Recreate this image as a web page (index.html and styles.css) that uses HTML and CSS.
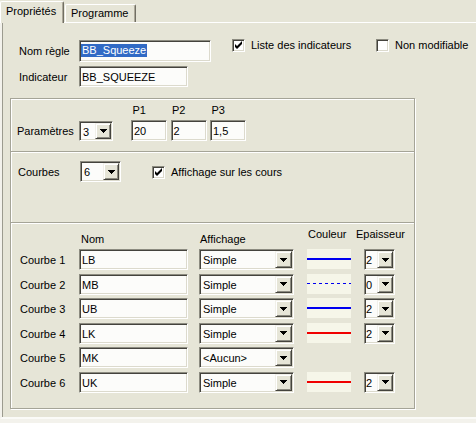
FILE: index.html
```html
<!DOCTYPE html>
<html lang="fr">
<head>
<meta charset="utf-8">
<title>Propriétés</title>
<link rel="stylesheet" href="styles.css">
</head>
<body>
<div class="tabs">
  <div class="tab active">Propriétés</div>
  <div class="tab">Programme</div>
</div>
<div class="panel">
  <div class="head">
    <div class="hrow">
      <span class="lbl w60">Nom règle</span>
      <div class="field f-nom"><span class="sel">BB_Squeeze</span></div>
      <div class="checks">
        <div class="chk c1"><span class="box"><svg width="9" height="9" viewBox="0 0 9 9"><path d="M1 3v3l2 2l5-5v-3l-5 5z" fill="#000"/></svg></span><span class="ctext">Liste des indicateurs</span></div>
        <div class="chk"><span class="box"></span><span class="ctext">Non modifiable</span></div>
      </div>
    </div>
    <div class="hrow r2">
      <span class="lbl w60">Indicateur</span>
      <div class="field f-ind">BB_SQUEEZE</div>
    </div>
  </div>

  <div class="group">
    <div class="sec s-params">
      <span class="lbl l-params">Paramètres</span>
      <div class="combo c-3"><span class="val">3</span><span class="btn"><svg width="7" height="4" viewBox="0 0 7 4"><path d="M0 0h7v1h-1v1h-1v1h-1v1h-1v-1h-1v-1h-1v-1h-1z" fill="#000"/></svg></span></div>
      <div class="pcols">
        <div class="pcol"><span class="plbl">P1</span><div class="field f-p">20</div></div>
        <div class="pcol"><span class="plbl">P2</span><div class="field f-p">2</div></div>
        <div class="pcol"><span class="plbl">P3</span><div class="field f-p">1,5</div></div>
      </div>
    </div>

    <div class="sec s-courbes">
      <span class="lbl l-courbes">Courbes</span>
      <div class="combo c-6"><span class="val">6</span><span class="btn"><svg width="7" height="4" viewBox="0 0 7 4"><path d="M0 0h7v1h-1v1h-1v1h-1v1h-1v-1h-1v-1h-1v-1h-1z" fill="#000"/></svg></span></div>
      <div class="chk c-aff"><span class="box"><svg width="9" height="9" viewBox="0 0 9 9"><path d="M1 3v3l2 2l5-5v-3l-5 5z" fill="#000"/></svg></span><span class="ctext">Affichage sur les cours</span></div>
    </div>

    <div class="sec s-table">
      <div class="grid thead">
        <span></span>
        <span class="th th-nom">Nom</span>
        <span class="th th-aff">Affichage</span>
        <span class="th th-col">Couleur</span>
        <span class="th th-ep">Epaisseur</span>
      </div>
      <div class="grid tbody">
        <span class="rl">Courbe 1</span>
        <div class="field f-n">LB</div>
        <div class="combo c-aff"><span class="val">Simple</span><span class="btn"><svg width="7" height="4" viewBox="0 0 7 4"><path d="M0 0h7v1h-1v1h-1v1h-1v1h-1v-1h-1v-1h-1v-1h-1z" fill="#000"/></svg></span></div>
        <div class="swatch"><span class="ln solid blue"></span></div>
        <div class="combo c-ep"><span class="val">2</span><span class="btn"><svg width="7" height="4" viewBox="0 0 7 4"><path d="M0 0h7v1h-1v1h-1v1h-1v1h-1v-1h-1v-1h-1v-1h-1z" fill="#000"/></svg></span></div>

        <span class="rl">Courbe 2</span>
        <div class="field f-n">MB</div>
        <div class="combo c-aff"><span class="val">Simple</span><span class="btn"><svg width="7" height="4" viewBox="0 0 7 4"><path d="M0 0h7v1h-1v1h-1v1h-1v1h-1v-1h-1v-1h-1v-1h-1z" fill="#000"/></svg></span></div>
        <div class="swatch"><span class="ln dashed"></span></div>
        <div class="combo c-ep"><span class="val">0</span><span class="btn"><svg width="7" height="4" viewBox="0 0 7 4"><path d="M0 0h7v1h-1v1h-1v1h-1v1h-1v-1h-1v-1h-1v-1h-1z" fill="#000"/></svg></span></div>

        <span class="rl">Courbe 3</span>
        <div class="field f-n">UB</div>
        <div class="combo c-aff"><span class="val">Simple</span><span class="btn"><svg width="7" height="4" viewBox="0 0 7 4"><path d="M0 0h7v1h-1v1h-1v1h-1v1h-1v-1h-1v-1h-1v-1h-1z" fill="#000"/></svg></span></div>
        <div class="swatch"><span class="ln solid blue"></span></div>
        <div class="combo c-ep"><span class="val">2</span><span class="btn"><svg width="7" height="4" viewBox="0 0 7 4"><path d="M0 0h7v1h-1v1h-1v1h-1v1h-1v-1h-1v-1h-1v-1h-1z" fill="#000"/></svg></span></div>

        <span class="rl">Courbe 4</span>
        <div class="field f-n">LK</div>
        <div class="combo c-aff"><span class="val">Simple</span><span class="btn"><svg width="7" height="4" viewBox="0 0 7 4"><path d="M0 0h7v1h-1v1h-1v1h-1v1h-1v-1h-1v-1h-1v-1h-1z" fill="#000"/></svg></span></div>
        <div class="swatch"><span class="ln solid red"></span></div>
        <div class="combo c-ep"><span class="val">2</span><span class="btn"><svg width="7" height="4" viewBox="0 0 7 4"><path d="M0 0h7v1h-1v1h-1v1h-1v1h-1v-1h-1v-1h-1v-1h-1z" fill="#000"/></svg></span></div>

        <span class="rl">Courbe 5</span>
        <div class="field f-n">MK</div>
        <div class="combo c-aff"><span class="val">&lt;Aucun&gt;</span><span class="btn"><svg width="7" height="4" viewBox="0 0 7 4"><path d="M0 0h7v1h-1v1h-1v1h-1v1h-1v-1h-1v-1h-1v-1h-1z" fill="#000"/></svg></span></div>
        <span></span>
        <span></span>

        <span class="rl">Courbe 6</span>
        <div class="field f-n">UK</div>
        <div class="combo c-aff"><span class="val">Simple</span><span class="btn"><svg width="7" height="4" viewBox="0 0 7 4"><path d="M0 0h7v1h-1v1h-1v1h-1v1h-1v-1h-1v-1h-1v-1h-1z" fill="#000"/></svg></span></div>
        <div class="swatch"><span class="ln solid red"></span></div>
        <div class="combo c-ep"><span class="val">2</span><span class="btn"><svg width="7" height="4" viewBox="0 0 7 4"><path d="M0 0h7v1h-1v1h-1v1h-1v1h-1v-1h-1v-1h-1v-1h-1z" fill="#000"/></svg></span></div>
      </div>
    </div>
  </div>
</div>
</body>
</html>
```

FILE: styles.css
```css
* { box-sizing: border-box; }

html, body {
  margin: 0;
  background: #f3f2ec;
}

body {
  width: 476px;
  height: 423px;
  overflow: hidden;
  font-family: "Liberation Sans", Arial, sans-serif;
  font-size: 11px;
  color: #000;
}

/* ---------- tabs ---------- */
.tabs {
  height: 22px;
  display: flex;
  align-items: flex-end;
  background: #e6e5d7;
}

.tab {
  height: 18px;
  width: 71px;
  margin-left: 1px;
  padding: 1px 0 0 5px;
  line-height: 14px;
  background: #e6e5d7;
  border-top: 1px solid #fff;
  border-left: 1px solid #fff;
  border-right: 1px solid #716f64;
  border-radius: 2px 2px 0 0;
  box-shadow: inset -1px 0 #aca899;
  white-space: nowrap;
}

.tab.active {
  position: relative;
  z-index: 1;
  height: 22px;
  width: 64px;
  margin-left: 0;
  margin-bottom: -1px;
  padding-top: 2px;
}

/* ---------- panel ---------- */
.panel {
  height: 397px;
  background: #e6e5d7;
  border-top: 1px solid #fff;
  border-left: 2px solid #f3f2ec;
  border-bottom: 2px solid #fbfbf8;
  box-shadow: inset 1px 0 #9c9b8f;
}

.head {
  padding: 17px 0 0 17px;
}

.hrow {
  display: flex;
  align-items: center;
  height: 22px;
}

.hrow.r2 {
  margin-top: 4px;
  height: 21px;
}

.lbl { white-space: nowrap; }
.w60 { width: 60px; flex: none; }

/* ---------- sunken fields ---------- */
.field,
.combo,
.box {
  border: 1px solid;
  border-color: #8c8b80 #fff #fff #8c8b80;
  box-shadow: inset 1px 1px #44433d, inset -1px -1px #dcdacd;
  background: #fcfcfa;
}

.field {
  flex: none;
  height: 21px;
  padding: 4px 0 0 2px;
  line-height: 13px;
  white-space: nowrap;
  overflow: hidden;
}

.f-nom {
  width: 132px;
  height: 22px;
  padding-top: 3px;
}

.sel {
  display: inline-block;
  line-height: 13px;
  padding: 0 1px;
  margin-left: -1px;
  background: #316ac5;
  color: #fff;
}

.f-ind { width: 109px; }

/* ---------- checkboxes ---------- */
.checks {
  display: flex;
  align-self: flex-start;
  margin: -1px 0 0 21px;
}

.chk {
  display: flex;
  align-items: center;
  white-space: nowrap;
}

.chk.c1 { width: 144px; }

.box {
  flex: none;
  width: 13px;
  height: 13px;
  padding: 1px;
  background: #fff;
  margin-right: 6px;
}

.box svg { display: block; }

.ctext { line-height: 13px; }

/* ---------- combo boxes ---------- */
.combo {
  flex: none;
  display: flex;
  height: 21px;
  padding: 1px;
}

.combo .val {
  flex: 1;
  padding: 3px 0 0 2px;
  line-height: 13px;
  white-space: nowrap;
  overflow: hidden;
}

.combo .btn {
  flex: none;
  width: 16px;
  display: flex;
  align-items: center;
  justify-content: center;
  background: #e6e5d7;
  border: 1px solid;
  border-color: #f1f0e9 #44433d #44433d #f1f0e9;
  box-shadow: inset 1px 1px #fff, inset -1px -1px #8c8b80;
}

.combo .btn svg { display: block; }

.c-3 { width: 34px; height: 20px; }
.c-6 { width: 41px; }
.c-aff { width: 95px; }
.c-aff .btn { width: 17px; }
.c-ep { width: 31px; }
.c-ep .val { padding-left: 0; }

/* ---------- group box ---------- */
.group {
  margin: 11px 0 0 8px;
  width: 405px;
  height: 311px;
  border: 1px solid #a5a497;
  box-shadow: inset 1px 1px #fff, 1px 1px #fff;
  display: flex;
  flex-direction: column;
}

.sec + .sec {
  border-top: 1px solid #a5a497;
  box-shadow: inset 0 1px #fff;
}

.s-params {
  flex: none;
  height: 52px;
  display: flex;
  align-items: flex-end;
  padding-bottom: 10px;
}

.l-params {
  width: 62px;
  margin-left: 6px;
  line-height: 20px;
}

.pcols {
  display: flex;
  gap: 3.5px;
  margin-left: 18px;
}

.pcol {
  display: flex;
  flex-direction: column;
}

.plbl {
  line-height: 13px;
  padding-left: 1.5px;
  margin-bottom: 3px;
}

.f-p { width: 36px; }

.s-courbes {
  flex: none;
  height: 71px;
  display: flex;
  align-items: flex-start;
  padding-top: 9px;
}

.l-courbes {
  width: 62px;
  margin-left: 7px;
  padding-top: 1px;
  line-height: 21px;
}

.c-aff.chk,
.chk.c-aff {
  margin: 5px 0 0 31px;
  width: auto;
}

.s-table {
  flex: 1;
  padding: 5px 0 0 9px;
}

.grid {
  display: grid;
  grid-template-columns: 59px 120px 108px 57px 31px;
}

.thead { height: 21px; }

.th {
  line-height: 13px;
  white-space: nowrap;
}

.th-nom, .th-aff {
  align-self: end;
  padding-bottom: 3px;
}

.th-nom { padding-left: 2px; }
.th-aff { padding-left: 1px; }
.th-col { align-self: start; padding-left: 1px; }
.th-ep { align-self: start; margin-left: -8px; }

.tbody {
  grid-auto-rows: 21px;
  row-gap: 3.6px;
  align-items: start;
}

.rl {
  line-height: 13px;
  padding-top: 5px;
  white-space: nowrap;
}

.f-n { width: 109px; }

.swatch {
  width: 44px;
  height: 20px;
  padding-top: 9px;
  background: #f6f6e9;
}

.ln {
  display: block;
  height: 2px;
}

.ln.blue { background: #0000f0; }
.ln.red { background: #f00000; }

.ln.dashed {
  height: 1px;
  background: repeating-linear-gradient(90deg, #0000f0 0 3px, transparent 3px 6px);
}
```
